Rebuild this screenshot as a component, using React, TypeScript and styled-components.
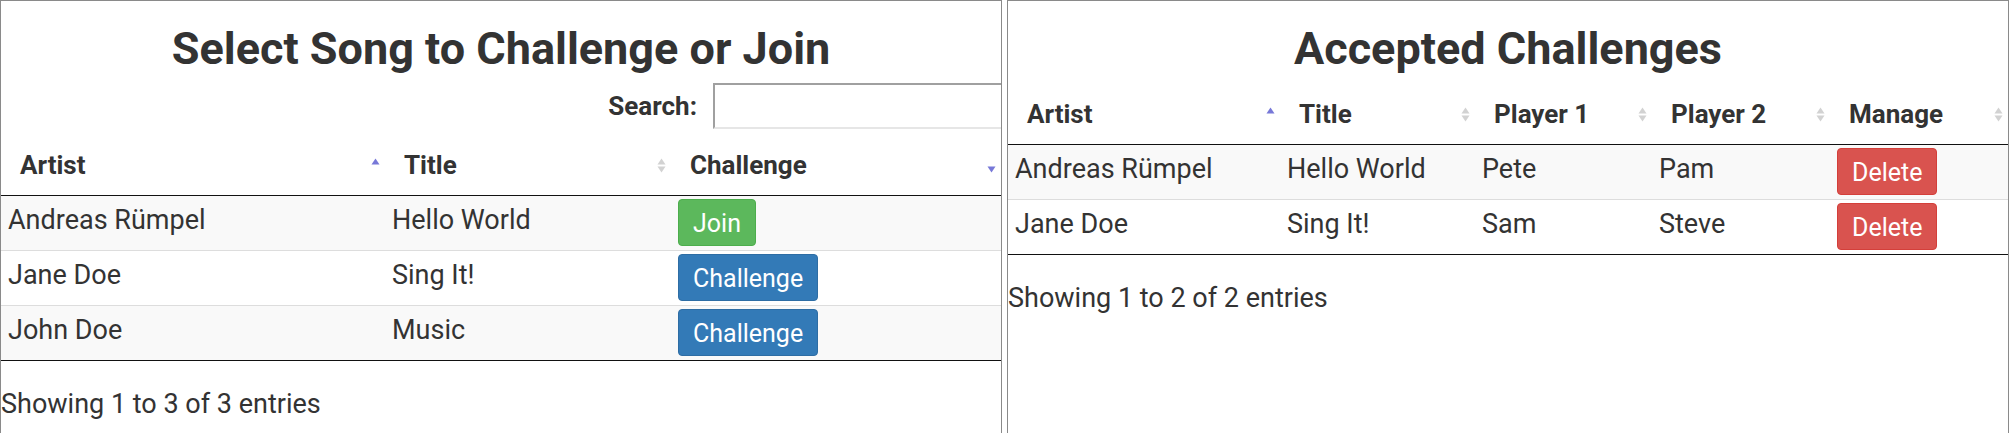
import React from "react";
import styled, { createGlobalStyle } from "styled-components";

const GlobalStyle = createGlobalStyle`
  html, body {
    margin: 0;
    padding: 0;
    background: #fff;
  }
  body {
    font-family: Roboto, "Liberation Sans", Arial, sans-serif;
    color: #333;
  }
`;

const Page = styled.div`
  display: flex;
  gap: 5px;
  height: 100vh;
`;

const Panel = styled.section`
  width: 1002px;
  box-sizing: border-box;
  border: 1px solid #8a8a8a;
  border-bottom: none;
  overflow: hidden;
`;

const Heading = styled.h1`
  margin: 18px 0 4px;
  font-size: 45px;
  line-height: 60px;
  font-weight: 700;
  text-align: center;
  color: #333;
`;

const SearchRow = styled.div`
  display: flex;
  justify-content: flex-end;
  align-items: center;
  gap: 16px;
  height: 46px;
  margin-bottom: 5px;
`;

const SearchLabel = styled.label`
  font-size: 26px;
  line-height: 30px;
  font-weight: 700;
`;

const SearchInput = styled.input`
  width: 290px;
  height: 46px;
  box-sizing: border-box;
  margin: 0 -2px 0 0;
  padding: 0 6px;
  border-style: solid;
  border-width: 2px;
  border-color: #a0a0a0 #e6e6e6 #e6e6e6 #a0a0a0;
  background: #fff;
  font: inherit;
  font-size: 26px;
  outline: none;
`;

const Table = styled.table`
  width: 100%;
  table-layout: fixed;
  border-collapse: separate;
  border-spacing: 0;
  border-bottom: 1px solid #111;
`;

const Th = styled.th`
  padding: 16px 5px 15px 19px;
  border-bottom: 1px solid #111;
  text-align: left;
  font-size: 26px;
  line-height: 30px;
  font-weight: 700;
`;

const HeadInner = styled.div`
  display: flex;
  align-items: center;
  justify-content: space-between;
`;

const Row = styled.tr<{ $striped: boolean }>`
  background: ${(p) => (p.$striped ? "#f9f9f9" : "#fff")};
  &:not(:first-child) > td {
    border-top: 1px solid #ddd;
  }
`;

const Td = styled.td`
  padding: 3px 7px 4px;
  vertical-align: top;
  font-size: 27px;
  line-height: 42px;
  white-space: nowrap;
`;

const btnColors = {
  success: ["#5cb85c", "#4cae4c"],
  primary: ["#337ab7", "#2e6da4"],
  danger: ["#d9534f", "#d43f3a"],
};

type Variant = keyof typeof btnColors;

const Button = styled.button<{ $variant: Variant }>`
  display: inline-block;
  vertical-align: top;
  height: 47px;
  box-sizing: border-box;
  padding: 2px 14px 0;
  border: 1px solid ${(p) => btnColors[p.$variant][1]};
  border-radius: 4px;
  background: ${(p) => btnColors[p.$variant][0]};
  color: #fff;
  font-family: inherit;
  font-size: 25px;
  line-height: 44px;
  cursor: pointer;
`;

const Info = styled.div`
  padding-top: 24px;
  font-size: 27px;
  line-height: 38px;
`;

type SortDir = "asc" | "desc" | "both";

const SortIcon = ({ dir }: { dir: SortDir }) => {
  const on = "#7778d8";
  const off = "#d2d2d2";
  return (
    <svg width="9" height="15" viewBox="0 0 9 15">
      {dir !== "desc" && (
        <path d="M0.5 6.5 L4.5 0.5 L8.5 6.5 Z" fill={dir === "asc" ? on : off} />
      )}
      {dir !== "asc" && (
        <path d="M0.5 8.5 L8.5 8.5 L4.5 14.5 Z" fill={dir === "desc" ? on : off} />
      )}
    </svg>
  );
};

type Col = { label: string; width: number; sort: SortDir };

const HeadRow = ({ cols }: { cols: Col[] }) => (
  <>
    <colgroup>
      {cols.map((c) => (
        <col key={c.label} style={{ width: c.width }} />
      ))}
    </colgroup>
    <thead>
      <tr>
        {cols.map((c) => (
          <Th key={c.label}>
            <HeadInner>
              <span>{c.label}</span>
              <SortIcon dir={c.sort} />
            </HeadInner>
          </Th>
        ))}
      </tr>
    </thead>
  </>
);

const songCols: Col[] = [
  { label: "Artist", width: 384, sort: "asc" },
  { label: "Title", width: 286, sort: "both" },
  { label: "Challenge", width: 330, sort: "desc" },
];

const songs = [
  { artist: "Andreas Rümpel", title: "Hello World", action: "Join" },
  { artist: "Jane Doe", title: "Sing It!", action: "Challenge" },
  { artist: "John Doe", title: "Music", action: "Challenge" },
];

const acceptedCols: Col[] = [
  { label: "Artist", width: 272, sort: "asc" },
  { label: "Title", width: 195, sort: "both" },
  { label: "Player 1", width: 177, sort: "both" },
  { label: "Player 2", width: 178, sort: "both" },
  { label: "Manage", width: 178, sort: "both" },
];

const accepted = [
  { artist: "Andreas Rümpel", title: "Hello World", p1: "Pete", p2: "Pam" },
  { artist: "Jane Doe", title: "Sing It!", p1: "Sam", p2: "Steve" },
];

export default function App() {
  return (
    <>
      <GlobalStyle />
      <Page>
        <Panel>
          <Heading>Select Song to Challenge or Join</Heading>
          <SearchRow>
            <SearchLabel htmlFor="song-search">Search:</SearchLabel>
            <SearchInput id="song-search" type="search" />
          </SearchRow>
          <Table>
            <HeadRow cols={songCols} />
            <tbody>
              {songs.map((s, i) => (
                <Row key={s.artist} $striped={i % 2 === 0}>
                  <Td>{s.artist}</Td>
                  <Td>{s.title}</Td>
                  <Td>
                    <Button $variant={s.action === "Join" ? "success" : "primary"}>
                      {s.action}
                    </Button>
                  </Td>
                </Row>
              ))}
            </tbody>
          </Table>
          <Info>Showing 1 to 3 of 3 entries</Info>
        </Panel>
        <Panel>
          <Heading>Accepted Challenges</Heading>
          <Table>
            <HeadRow cols={acceptedCols} />
            <tbody>
              {accepted.map((a, i) => (
                <Row key={a.artist} $striped={i % 2 === 0}>
                  <Td>{a.artist}</Td>
                  <Td>{a.title}</Td>
                  <Td>{a.p1}</Td>
                  <Td>{a.p2}</Td>
                  <Td>
                    <Button $variant="danger">Delete</Button>
                  </Td>
                </Row>
              ))}
            </tbody>
          </Table>
          <Info>Showing 1 to 2 of 2 entries</Info>
        </Panel>
      </Page>
    </>
  );
}
